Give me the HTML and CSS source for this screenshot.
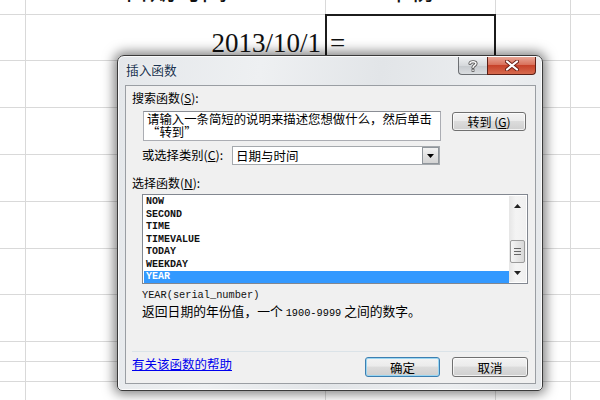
FILE: index.html
```html
<!DOCTYPE html>
<html lang="zh-CN">
<head>
<meta charset="utf-8">
<title>插入函数</title>
<link rel="stylesheet" href="styles.css">
</head>
<body>
<div class="sheet">
  <div class="cell"></div><div class="cell head"><span>日期时间</span></div><div class="cell head"><span>年份</span></div><div class="cell"></div><div class="cell"></div>
  <div class="cell"></div><div class="cell date">2013/10/1</div><div class="cell active">=</div><div class="cell"></div><div class="cell"></div>
  <div class="cell"></div><div class="cell"></div><div class="cell"></div><div class="cell"></div><div class="cell"></div>
  <div class="cell"></div><div class="cell"></div><div class="cell"></div><div class="cell"></div><div class="cell"></div>
  <div class="cell"></div><div class="cell"></div><div class="cell"></div><div class="cell"></div><div class="cell"></div>
  <div class="cell"></div><div class="cell"></div><div class="cell"></div><div class="cell"></div><div class="cell"></div>
  <div class="cell"></div><div class="cell"></div><div class="cell"></div><div class="cell"></div><div class="cell"></div>
  <div class="cell"></div><div class="cell"></div><div class="cell"></div><div class="cell"></div><div class="cell"></div>
  <div class="cell"></div><div class="cell"></div><div class="cell"></div><div class="cell"></div><div class="cell"></div>
  <div class="cell"></div><div class="cell"></div><div class="cell"></div><div class="cell"></div><div class="cell"></div>
  <div class="cell"></div><div class="cell"></div><div class="cell"></div><div class="cell"></div><div class="cell"></div>
</div>

<div class="dialog">
  <div class="titlebar">
    <span class="title">插入函数</span>
    <div class="tbtns">
      <div class="tb help">
        <svg width="10" height="12" viewBox="0 0 10 12"><path d="M2 3.5 C2 1.2 8 1.2 8 3.6 C8 5.4 5 5.4 5 7.6" fill="none" stroke="#555" stroke-width="3.2" stroke-linecap="round"/><path d="M2 3.5 C2 1.2 8 1.2 8 3.6 C8 5.4 5 5.4 5 7.6" fill="none" stroke="#fff" stroke-width="1.4" stroke-linecap="round"/><rect x="3.6" y="9" width="2.8" height="2.8" fill="#555"/><rect x="4.3" y="9.6" width="1.4" height="1.4" fill="#fff"/></svg>
      </div>
      <div class="tb close">
        <svg width="14" height="11" viewBox="0 0 14 11"><path d="M2 1.5 L12 9.5 M12 1.5 L2 9.5" stroke="#6b2015" stroke-width="4" stroke-linecap="round"/><path d="M2 1.5 L12 9.5 M12 1.5 L2 9.5" stroke="#fff" stroke-width="2.2" stroke-linecap="round"/></svg>
      </div>
    </div>
  </div>
  <div class="client">
    <div class="lbl">搜索函数(<u>S</u>):</div>
    <div class="search-row">
      <div class="textbox">请输入一条简短的说明来描述您想做什么，然后单击“转到”</div>
      <div class="btn go">转到 (<u>G</u>)</div>
    </div>
    <div class="cat-row">
      <div class="cat-lbl">或选择类别(<u>C</u>):</div>
      <div class="select">
        <span class="sel-text">日期与时间</span>
        <span class="sel-btn"><svg width="7" height="4" viewBox="0 0 7 4"><path d="M0 0 H7 L3.5 4 Z" fill="#000"/></svg></span>
      </div>
    </div>
    <div class="lbl pick">选择函数(<u>N</u>):</div>
    <div class="list">
      <div class="items">
        <div class="item">NOW</div>
        <div class="item">SECOND</div>
        <div class="item">TIME</div>
        <div class="item">TIMEVALUE</div>
        <div class="item">TODAY</div>
        <div class="item">WEEKDAY</div>
        <div class="item sel">YEAR</div>
      </div>
      <div class="vscroll">
        <svg class="arr" width="7" height="4" viewBox="0 0 7 4"><path d="M0 4 H7 L3.5 0 Z" fill="#222"/></svg>
        <div class="thumb"><i></i><i></i><i></i></div>
        <svg class="arr" width="7" height="4" viewBox="0 0 7 4"><path d="M0 0 H7 L3.5 4 Z" fill="#222"/></svg>
      </div>
    </div>
    <div class="sig">YEAR(serial_number)</div>
    <div class="desc">返回日期的年份值，一个 <span class="num">1900-9999</span> 之间的数字。</div>
    <div class="footer">
      <a class="help-link" href="#">有关该函数的帮助</a>
      <div class="btns">
        <div class="btn ok">确定</div>
        <div class="btn cancel">取消</div>
      </div>
    </div>
  </div>
</div>
</body>
</html>
```

FILE: styles.css
```css
html, body {
  margin: 0;
  padding: 0;
  width: 600px;
  height: 400px;
  overflow: hidden;
  background: #fff;
  font-family: "Noto Sans CJK SC", sans-serif;
}

.sheet {
  display: grid;
  width: 600px;
  height: 400px;
  grid-template-columns: 25px 299px 169px 74px 1fr;
  grid-template-rows: 14px 45px 46px 46px 46px 46px 45px 46px 19px 19px 1fr;
  gap: 1px;
  background: #d9d9d9;
}

.cell {
  background: #fff;
  overflow: hidden;
  min-width: 0;
}

.head {
  display: flex;
  justify-content: center;
  font-size: 26px;
  line-height: 26px;
  color: #111;
}
.head span { margin-top: -24px; }

.date {
  display: flex;
  justify-content: flex-end;
  align-items: flex-end;
  font-family: "Liberation Serif", serif;
  font-size: 27px;
  line-height: 27px;
  color: #111;
  padding: 0 4px 3px 0;
}

.active {
  position: relative;
  z-index: 1;
  box-shadow: 0 0 0 1px #1c1c1c, inset 0 0 0 1px #1c1c1c;
  display: flex;
  align-items: flex-end;
  font-family: "Liberation Serif", serif;
  font-size: 27px;
  line-height: 27px;
  color: #111;
  padding: 0 0 3px 4px;
}

/* dialog */
.dialog {
  position: absolute;
  left: 117px;
  top: 55px;
  width: 426px;
  height: 336px;
  box-sizing: border-box;
  border: 1px solid #3a3a3a;
  border-radius: 7px 7px 5px 5px;
  background: linear-gradient(100deg, #e4e7ea 0%, #eef0f2 30%, #e2e5e8 55%, #eceef0 80%, #e3e6e9 100%);
  box-shadow: 0 0 12px 3px rgba(0,0,0,0.5), inset 0 0 0 1px rgba(255,255,255,0.8);
  display: flex;
  flex-direction: column;
  padding: 0 6px 6px 7px;
  z-index: 5;
}

.titlebar {
  height: 29px;
  display: flex;
  align-items: flex-start;
  flex: none;
}

.title {
  font-size: 12.7px;
  line-height: 16px;
  margin-top: 6px;
  margin-left: 1px;
  color: #1b3450;
  text-shadow: 0 0 4px rgba(255,255,255,0.9);
}

.tbtns {
  margin-left: auto;
  display: flex;
  margin-top: 1px;
}

.tb {
  height: 18px;
  box-sizing: border-box;
  display: flex;
  align-items: center;
  justify-content: center;
}

.help {
  width: 29px;
  border: 1px solid #6c6f73;
  border-top: none;
  border-right: none;
  border-radius: 0 0 0 4px;
  background: linear-gradient(#eef0f2, #d6d9dc 50%, #c5c9cd 51%, #dadde0);
}

.close {
  width: 49px;
  border: 1px solid #5a1f16;
  border-top: none;
  border-radius: 0 0 4px 0;
  background: linear-gradient(#e8a595, #d9725c 45%, #c7432a 50%, #d66a4e 100%);
}

.client {
  flex: 1;
  background: #f0f0f0;
  border: 1px solid #9a9ea3;
  display: flex;
  flex-direction: column;
  padding: 5px 6px 6px 6px;
  font-size: 12px;
  color: #000;
}

.lbl {
  line-height: 14px;
  height: 14px;
}

u { text-decoration: underline; }

.search-row {
  display: flex;
  align-items: flex-start;
  margin-top: 6px;
  padding-left: 11px;
}

.textbox {
  width: 298px;
  height: 30px;
  box-sizing: border-box;
  background: #fff;
  border: 1px solid #abadb3;
  border-top-color: #8a8d94;
  font-size: 12.4px;
  line-height: 13px;
  padding: 1px 2px 0 3px;
  overflow: hidden;
}

.btn {
  box-sizing: border-box;
  border: 1px solid #707070;
  border-radius: 3px;
  background: linear-gradient(#f3f3f3, #ebebeb 45%, #dcdcdc 50%, #cfcfcf);
  box-shadow: inset 0 0 0 1px rgba(255,255,255,0.7);
  display: flex;
  align-items: center;
  justify-content: center;
  color: #000;
}

.go {
  width: 74px;
  height: 19px;
  margin: 1px 0 0 11px;
  font-size: 12px;
}

.cat-row {
  display: flex;
  margin-top: 5px;
  padding-left: 10px;
  height: 19px;
}

.cat-lbl {
  flex: 0 0 90px;
  line-height: 19px;
  font-size: 12.3px;
}

.select {
  width: 208px;
  height: 19px;
  box-sizing: border-box;
  border: 1px solid #a5a9ad;
  background: #fff;
  display: flex;
  align-items: center;
}

.sel-text {
  flex: 1;
  padding-left: 3px;
  font-size: 12.5px;
  line-height: 17px;
}

.sel-btn {
  width: 17px;
  height: 17px;
  box-sizing: border-box;
  border: 1px solid #8f959b;
  background: linear-gradient(#f2f2f2, #e2e2e2 50%, #d3d3d3);
  display: flex;
  align-items: center;
  justify-content: center;
}

.pick { margin-top: 11px; }

.list {
  margin: 4px 0 0 10px;
  width: 386px;
  height: 90px;
  box-sizing: border-box;
  border: 1px solid #828790;
  background: #fff;
  display: flex;
  padding: 1px 1px 1px 1px;
}

.items {
  flex: 1;
  font-family: "Liberation Mono", monospace;
  font-size: 10px;
  font-weight: bold;
  color: #111;
}

.item {
  height: 12.5px;
  line-height: 12.5px;
  padding-left: 2px;
}

.item.sel {
  background: #3399ff;
  color: #fff;
  height: 12px;
}

.vscroll {
  width: 17px;
  background: linear-gradient(90deg, #e6e6e6, #f4f4f4 40%, #f0f0f0);
  display: flex;
  flex-direction: column;
  align-items: center;
}

.arr { flex: none; }
.vscroll .arr:first-child { margin-top: 8px; }
.vscroll .arr:last-child { margin-top: 8px; }

.thumb {
  margin-top: 32px;
  width: 15px;
  height: 23px;
  box-sizing: border-box;
  border: 1px solid #9b9b9b;
  border-radius: 2px;
  background: linear-gradient(90deg, #f5f5f5, #e6e6e6 50%, #d8d8d8);
  display: flex;
  flex-direction: column;
  align-items: center;
  justify-content: center;
  gap: 2px;
}
.thumb i {
  display: block;
  width: 7px;
  height: 1px;
  background: #666;
}

.sig {
  margin: 5px 0 0 10px;
  font-family: "Liberation Mono", monospace;
  font-size: 10.3px;
  line-height: 13px;
  height: 13px;
  color: #111;
}

.desc {
  margin: 1px 0 0 10px;
  font-size: 12.8px;
  line-height: 15px;
  color: #000;
}
.desc .num {
  font-family: "Liberation Mono", monospace;
  font-size: 10.3px;
}

.footer {
  margin-top: auto;
  border-top: 1px solid #dbe3e8;
  padding-top: 5px;
  display: flex;
  align-items: flex-start;
}

.help-link {
  font-size: 12.5px;
  line-height: 14px;
  color: #0000ee;
  text-decoration: underline;
}

.btns {
  margin-left: auto;
  display: flex;
  gap: 12px;
  margin-right: 1px;
}

.ok, .cancel {
  height: 20px;
  font-size: 12.5px;
}
.ok {
  width: 75px;
  border-color: #3c7fb1;
  box-shadow: inset 0 0 0 1px #9ad6f2;
}
.cancel { width: 76px; }
```
